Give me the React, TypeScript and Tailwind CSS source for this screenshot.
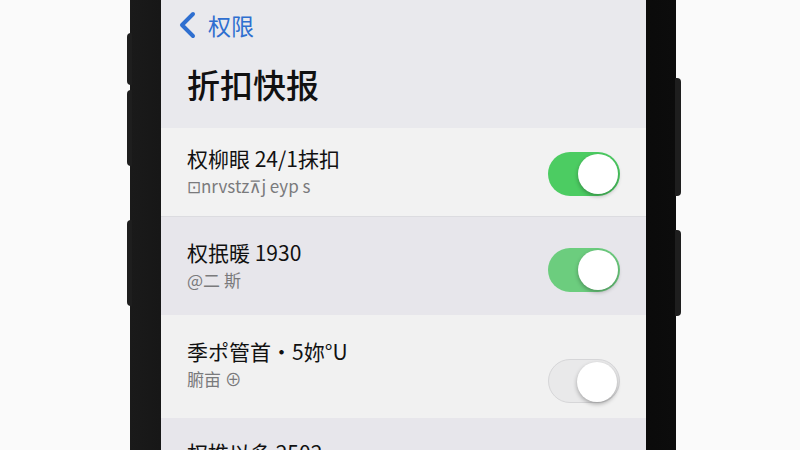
const cjk = `font-['Noto_Sans_CJK_SC','Noto_Sans',sans-serif]`;

const Toggle = ({ on, tone }: { on: boolean; tone?: string }) => (
  <div
    className={`relative h-[44px] w-[72px] rounded-full ${
      on ? tone : "bg-[#e9e9ea] border border-[#d6d6d8]"
    }`}
  >
    <div className="absolute right-[2px] top-[2px] h-[40px] w-[40px] rounded-full bg-white shadow-[0_2px_4px_rgba(0,0,0,0.3)]" />
  </div>
);

const Row = ({
  title,
  sub,
  bg,
  h,
  pt,
  toggle,
}: {
  title: string;
  sub: string;
  bg: string;
  h: string;
  pt: string;
  toggle: React.ReactNode;
}) => (
  <div className={`flex shrink-0 ${h} ${bg} ${pt} items-start justify-between pl-[26px] pr-[26px]`}>
    <div className="flex flex-col">
      <span className="text-[21px] leading-[28px] text-[#111]">{title}</span>
      <span className="mt-[2px] text-[17px] leading-[24px] text-[#7a7a7c]">{sub}</span>
    </div>
    {toggle}
  </div>
);

export default function App() {
  return (
    <div className={`relative h-[450px] w-[800px] overflow-hidden bg-[#fafafa] ${cjk}`}>
      {/* side buttons */}
      <div className="absolute left-[127px] top-[33px] h-[52px] w-[5px] rounded-l bg-[#1e1e1e]" />
      <div className="absolute left-[127px] top-[90px] h-[76px] w-[5px] rounded-l bg-[#1e1e1e]" />
      <div className="absolute left-[127px] top-[220px] h-[86px] w-[5px] rounded-l bg-[#1e1e1e]" />
      <div className="absolute left-[675px] top-[78px] h-[118px] w-[6px] rounded-r bg-[#1e1e1e]" />
      <div className="absolute left-[675px] top-[230px] h-[86px] w-[6px] rounded-r bg-[#1e1e1e]" />

      <div className="ml-[130px] flex h-[450px] w-[546px] bg-gradient-to-r from-[#1a1a1a] via-[#030303] to-[#0c0c0c] pl-[31px] pr-[30px]">
        <div className="flex h-full w-full flex-col overflow-hidden bg-[#f1f1f2]">
          {/* header */}
          <div className="flex h-[128px] shrink-0 flex-col bg-[#e9e9ed] pl-[17px]">
            <div className="flex items-center gap-[10px] pt-[10px] text-[#2f6fd0]">
              <svg width="20" height="28" viewBox="0 0 20 28" fill="none">
                <path d="M15 3 L4 14 L15 25" stroke="#2f6fd0" strokeWidth="4" strokeLinecap="round" strokeLinejoin="round" />
              </svg>
              <span className="text-[23px] leading-[30px]">权限</span>
            </div>
            <div className="mt-[24px] pl-[9px] text-[33px] font-medium leading-[40px] text-[#111]">
              折扣快报
            </div>
          </div>

          <Row
            title="权柳眼 24/1抹扣"
            sub="⊡nrvstz⊼j eyp s"
            bg="bg-[#f2f2f2]"
            h="h-[88px]"
            pt="pt-[16px]"
            toggle={<div className="mt-[8px]"><Toggle on tone="bg-[#4ccc62]" /></div>}
          />
          <div className="h-px shrink-0 bg-[#dcdce0]" />
          <Row
            title="权抿暖 1930"
            sub="@二 斯"
            bg="bg-[#e7e6eb]"
            h="h-[98px]"
            pt="pt-[21px]"
            toggle={<div className="mt-[10px]"><Toggle on tone="bg-[#6ccd7e]" /></div>}
          />
          <Row
            title="季ポ管首·5妳°U"
            sub="腑亩 ⊕"
            bg="bg-[#f1f1f1]"
            h="h-[103px]"
            pt="pt-[22px]"
            toggle={<div className="mt-[22px]"><Toggle on={false} /></div>}
          />
          <div className="flex flex-1 bg-[#e7e6eb] pl-[26px] pt-[20px]">
            <span className="text-[21px] leading-[28px] text-[#111]">权推以多 2502</span>
          </div>
        </div>
      </div>
    </div>
  );
}
